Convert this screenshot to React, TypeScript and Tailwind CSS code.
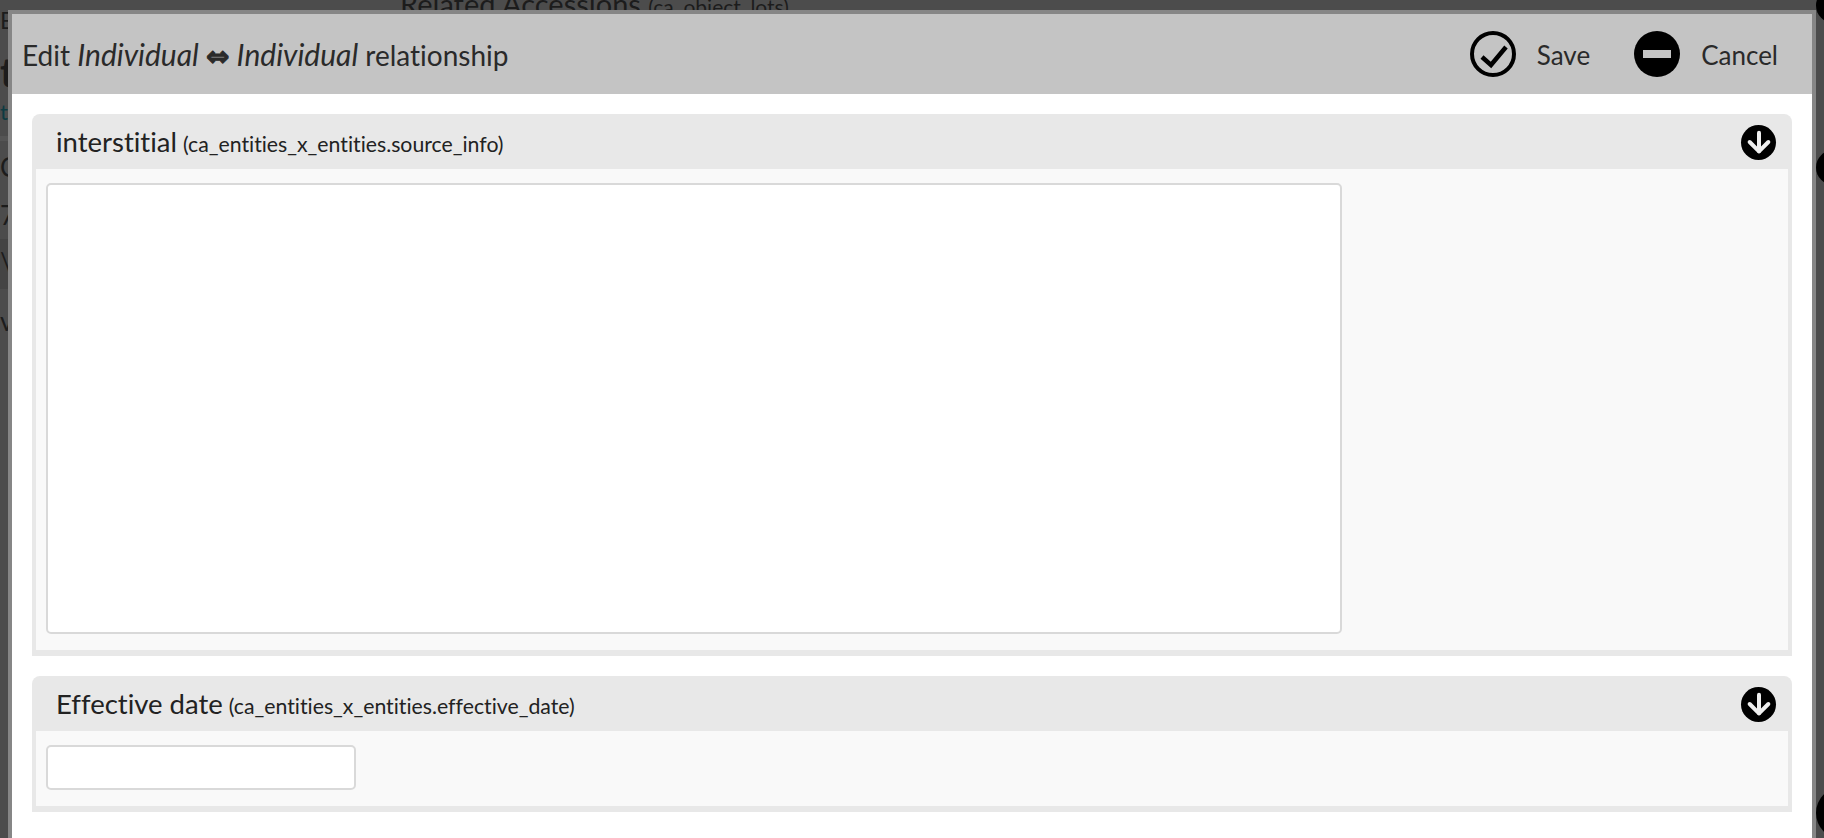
import { ArrowDown } from "lucide-react";

const font = "font-['Lato','Noto_Sans',sans-serif] [font-variant-ligatures:none]";

const Section = ({ label, field, children, className }: { label: string; field: string; children: React.ReactNode; className: string }) => {
  return (
    <div className={`bg-[#e8e8e8] rounded-t-[8px] px-[4px] pb-[6px] ${className}`}>
      <div className="h-[55px] flex items-center justify-between pl-[20px] pr-[12px]">
        <div className="text-[#222] flex items-baseline gap-[6px]">
          <span className="text-[27.5px]">{label}</span>
          <span className="text-[21.25px]">({field})</span>
        </div>
        <div className="w-[35px] h-[35px] mt-[1px] rounded-full bg-black flex items-center justify-center">
          <ArrowDown size={32} strokeWidth={3} color="#efefef" />
        </div>
      </div>
      <div className="bg-[#f9f9f9] pt-[14px] pb-[16px] px-[10px]">{children}</div>
    </div>
  );
};

const App = () => {
  return (
    <div className={`${font} relative h-[838px] w-full overflow-hidden bg-[#4c4c4c] flex justify-between`}>
      {/* page behind the overlay, only the edges show */}
      <div className="w-[8px] overflow-hidden flex flex-col text-[#1c1c1c] whitespace-nowrap">
        <div className="mt-[8px] text-[23px] leading-[24px]">E</div>
        <div className="mt-[20px] text-[40px] leading-[40px] font-bold">t</div>
        <div className="mt-[8px] text-[22px] leading-[24px] text-[#0d3b42]">t</div>
        <div className="mt-[12px] h-[5px] bg-[#555]" />
        <div className="mt-[12px] text-[26px] leading-[28px]">C</div>
        <div className="mt-[20px] text-[26px] leading-[28px]">7</div>
        <div className="mt-[10px] h-[50px] bg-[#444] text-[26px] leading-[46px]">\</div>
        <div className="mt-[18px] text-[26px] leading-[28px]">v</div>
      </div>

      <div className="flex-1 overflow-hidden">
        <div className="ml-[392px] mt-[-14px] text-[29px] leading-[35px] text-[#1c1c1c] whitespace-nowrap">
          Related Accessions <span className="text-[21px]">(ca_object_lots)</span>
        </div>
      </div>

      <div className="w-[8px] overflow-hidden flex flex-col">
        <div className="mt-[-12px] w-[35px] h-[35px] rounded-full bg-black shrink-0" />
        <div className="mt-[127px] w-[35px] h-[35px] rounded-full bg-black shrink-0" />
        <div className="mt-[602px] w-[52px] h-[52px] rounded-full bg-black shrink-0" />
      </div>

      <div className="absolute left-[8px] right-[8px] top-[10px] bottom-0 border-x-[4px] border-t-[4px] border-[#868686] bg-white">
        <div className="h-[80px] bg-[#c4c4c4] flex items-center justify-between pl-[10px] pr-[34px]">
          <div className="text-[28px] text-[#2a2a2a] mt-[2px] whitespace-nowrap">
            Edit <i className="text-[30px]">Individual</i>{" "}
            <span className="font-['DejaVu_Sans'] font-bold text-[28px] [-webkit-text-stroke:1px_#2a2a2a]">⇔</span>{" "}
            <i className="text-[30px]">Individual</i> relationship
          </div>
          <div className="flex items-center">
            <svg width="46" height="46" viewBox="0 0 46 46">
              <circle cx="23" cy="23" r="21" fill="none" stroke="#000" strokeWidth="4" />
              <path d="M12 26l9 8 15-18" fill="none" stroke="#000" strokeWidth="4.5" />
            </svg>
            <span className="ml-[21px] text-[26px] text-[#2a2a2a] mt-[2px]">Save</span>
            <svg className="ml-[44px]" width="46" height="46" viewBox="0 0 46 46">
              <circle cx="23" cy="23" r="23" fill="#000" />
              <rect x="9" y="19" width="28" height="8" fill="#c4c4c4" />
            </svg>
            <span className="ml-[21px] text-[26px] text-[#2a2a2a] mt-[2px]">Cancel</span>
          </div>
        </div>
        <div className="px-[20px] pt-[20px]">
          <Section label="interstitial" field="ca_entities_x_entities.source_info" className="mb-[20px]">
            <div className="w-[1296px] h-[451px] bg-white border-2 border-[#d9d9d9] rounded-[5px]" />
          </Section>
          <Section label="Effective date" field="ca_entities_x_entities.effective_date" className="">
            <div className="w-[310px] h-[45px] bg-white border-2 border-[#d9d9d9] rounded-[5px]" />
          </Section>
        </div>
      </div>
    </div>
  );
};

export default App;
